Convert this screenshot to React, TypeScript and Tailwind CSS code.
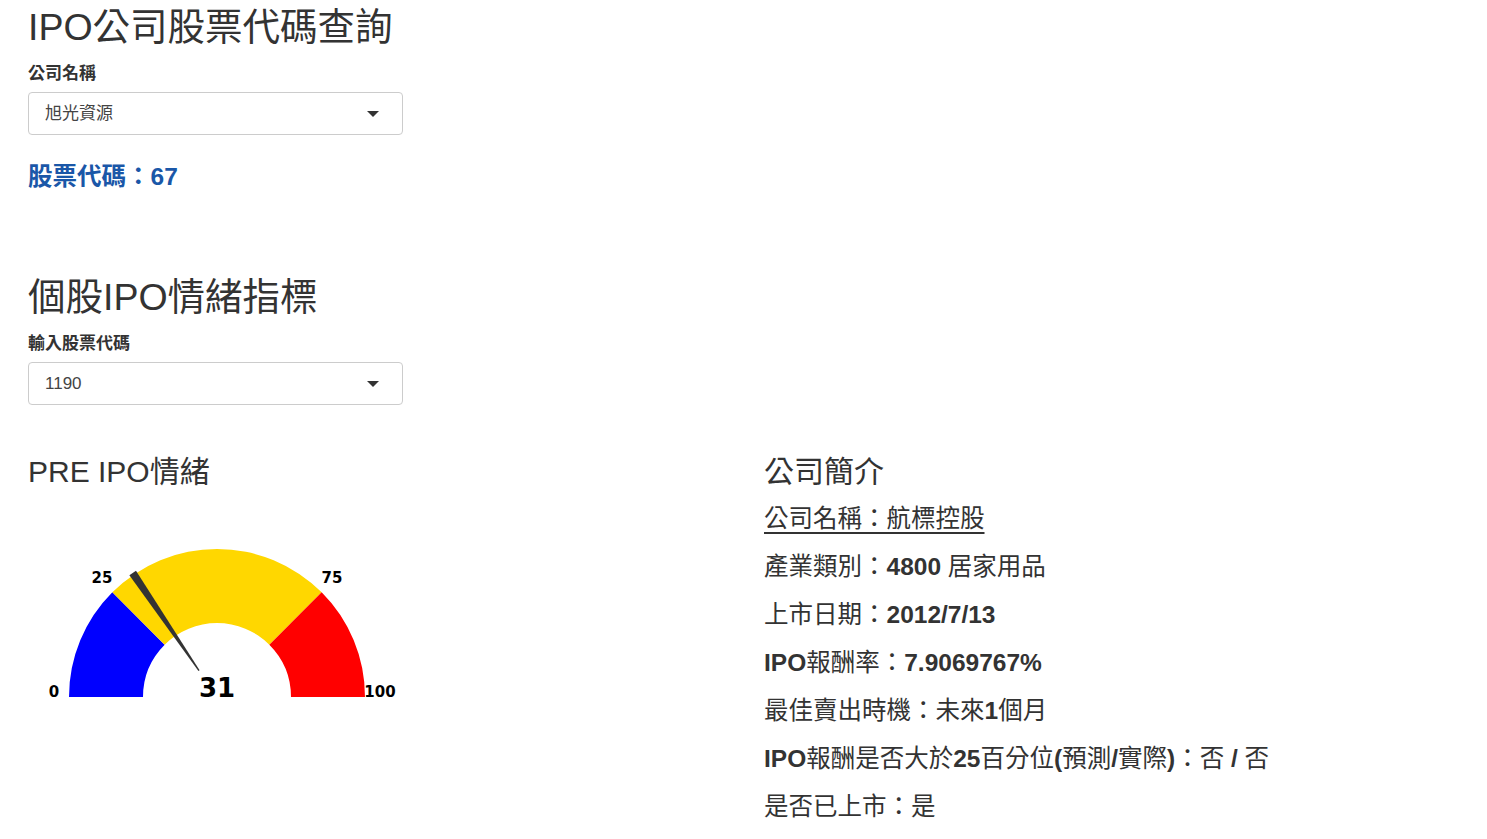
import React from "react";

const CX = 189;
const CY = 197;
const R_OUT = 148;
const R_IN = 74;

function pt(v: number, r: number) {
  const a = Math.PI * (1 - v / 100);
  return [CX + r * Math.cos(a), CY - r * Math.sin(a)];
}

function band(from: number, to: number) {
  const [x1, y1] = pt(from, R_OUT);
  const [x2, y2] = pt(to, R_OUT);
  const [x3, y3] = pt(to, R_IN);
  const [x4, y4] = pt(from, R_IN);
  return `M${x1} ${y1} A${R_OUT} ${R_OUT} 0 0 1 ${x2} ${y2} L${x3} ${y3} A${R_IN} ${R_IN} 0 0 0 ${x4} ${y4} Z`;
}

function needle(v: number) {
  const a = Math.PI * (1 - v / 100);
  const ux = Math.cos(a);
  const uy = -Math.sin(a);
  const px = -uy;
  const py = ux;
  const i = [CX + 32 * ux, CY + 32 * uy];
  const o = [CX + 150 * ux, CY + 150 * uy];
  const pts = [
    [i[0] + px * 0.7, i[1] + py * 0.7],
    [o[0] + px * 4, o[1] + py * 4],
    [o[0] - px * 4, o[1] - py * 4],
    [i[0] - px * 0.7, i[1] - py * 0.7],
  ];
  return pts.map((p) => p.join(",")).join(" ");
}

function Gauge({ value }: { value: number }) {
  return (
    <svg width="400" height="215" className="mt-[11px] block">
      <path d={band(0, 25)} fill="#0000ff" />
      <path d={band(25, 75)} fill="#ffd700" />
      <path d={band(75, 100)} fill="#ff0000" />
      <polygon points={needle(value)} fill="#333333" />
      <g fontFamily="DejaVu Sans, sans-serif" fontWeight="bold" fontSize="15" fill="#000" textAnchor="middle">
        <text x="26" y="197">0</text>
        <text x="74" y="83">25</text>
        <text x="304" y="83">75</text>
        <text x="352" y="197">100</text>
      </g>
      <text x="189" y="197" textAnchor="middle" fontFamily="DejaVu Sans, sans-serif" fontWeight="bold" fontSize="26" fill="#000">
        {value}
      </text>
    </svg>
  );
}

function Select({ value }: { value: string }) {
  return (
    <div className="w-[375px] h-[43px] border border-[#cccccc] rounded-[4px] flex items-center justify-between pl-[16px] pr-[23px] bg-white">
      <span className="text-[17px] text-[#444]">{value}</span>
      <span className="w-0 h-0 border-l-[6px] border-r-[6px] border-t-[6px] border-l-transparent border-r-transparent border-t-[#333]" />
    </div>
  );
}

function B({ children }: { children: React.ReactNode }) {
  return <span className="font-bold">{children}</span>;
}

export default function App() {
  return (
    <div className="min-h-screen bg-white text-[#333] font-['Liberation_Sans','Noto_Sans_CJK_TC',sans-serif] px-[28px]">
      <h1 className="text-[37.5px] leading-[40px] pt-[7px]">IPO公司股票代碼查詢</h1>
      <div className="mt-[17px] text-[17px] leading-[20px] font-semibold">公司名稱</div>
      <div className="mt-[8px]">
        <Select value="旭光資源" />
      </div>
      <div className="mt-[27px] text-[24.5px] leading-[30px] font-bold text-[#1a57a8]">股票代碼：67</div>

      <h1 className="mt-[85px] text-[37.5px] leading-[40px]">個股IPO情緒指標</h1>
      <div className="mt-[17px] text-[17px] leading-[20px] font-semibold">輸入股票代碼</div>
      <div className="mt-[8px]">
        <Select value="1190" />
      </div>

      <div className="mt-[50px] flex">
        <div className="w-[736px]">
          <h2 className="text-[30px] leading-[34px]">PRE IPO情緒</h2>
          <Gauge value={31} />
        </div>
        <div className="flex-1">
          <h2 className="text-[30px] leading-[34px]">公司簡介</h2>
          <div className="mt-[6px] text-[24.5px] leading-[48px]">
            <div>
              <span className="underline underline-offset-[5px]">公司名稱：航標控股</span>
            </div>
            <div>
              產業類別：<B>4800</B> 居家用品
            </div>
            <div>
              上市日期：<B>2012/7/13</B>
            </div>
            <div>
              <B>IPO</B>報酬率：<B>7.9069767%</B>
            </div>
            <div>
              最佳賣出時機：未來<B>1</B>個月
            </div>
            <div>
              <B>IPO</B>報酬是否大於<B>25</B>百分位<B>(</B>預測<B>/</B>實際<B>)</B>：否<B> / </B>否
            </div>
            <div>是否已上市：是</div>
          </div>
        </div>
      </div>
    </div>
  );
}
